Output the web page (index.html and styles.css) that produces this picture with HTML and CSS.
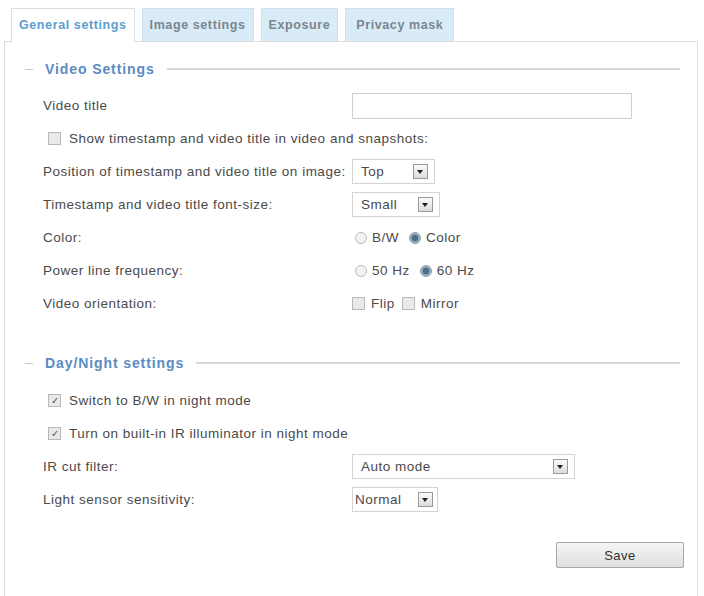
FILE: index.html
```html
<!DOCTYPE html>
<html lang="en">
<head>
    <meta charset="UTF-8">
    <title>General settings</title>
    <link rel="stylesheet" href="styles.css">
</head>
<body>
    <div class="tabs">
        <div class="tab active">General settings</div>
        <div class="tab">Image settings</div>
        <div class="tab">Exposure</div>
        <div class="tab">Privacy mask</div>
    </div>

    <div class="panel">
        <div class="section-head">
            <span class="dash"></span>
            <span class="section-title">Video Settings</span>
            <span class="rule"></span>
        </div>

        <div class="row">
            <div class="label">Video title</div>
            <div class="value"><div class="text-input wide"></div></div>
        </div>
        <div class="row">
            <div class="check-line"><span class="checkbox"></span>Show timestamp and video title in video and snapshots:</div>
        </div>
        <div class="row">
            <div class="label">Position of timestamp and video title on image:</div>
            <div class="value"><div class="select w83"><span>Top</span><span class="drop"></span></div></div>
        </div>
        <div class="row">
            <div class="label">Timestamp and video title font-size:</div>
            <div class="value"><div class="select w88"><span>Small</span><span class="drop"></span></div></div>
        </div>
        <div class="row">
            <div class="label">Color:</div>
            <div class="value">
                <span class="radio"></span><span class="opt">B/W</span>
                <span class="radio on"></span><span class="opt">Color</span>
            </div>
        </div>
        <div class="row">
            <div class="label">Power line frequency:</div>
            <div class="value">
                <span class="radio"></span><span class="opt">50 Hz</span>
                <span class="radio on"></span><span class="opt">60 Hz</span>
            </div>
        </div>
        <div class="row">
            <div class="label">Video orientation:</div>
            <div class="value">
                <span class="checkbox"></span><span class="opt">Flip</span>
                <span class="checkbox"></span><span class="opt">Mirror</span>
            </div>
        </div>

        <div class="section-head second">
            <span class="dash"></span>
            <span class="section-title">Day/Night settings</span>
            <span class="rule"></span>
        </div>

        <div class="row">
            <div class="check-line"><span class="checkbox checked">&#10003;</span>Switch to B/W in night mode</div>
        </div>
        <div class="row">
            <div class="check-line"><span class="checkbox checked">&#10003;</span>Turn on built-in IR illuminator in night mode</div>
        </div>
        <div class="row">
            <div class="label">IR cut filter:</div>
            <div class="value"><div class="select w223"><span>Auto mode</span><span class="drop"></span></div></div>
        </div>
        <div class="row">
            <div class="label">Light sensor sensitivity:</div>
            <div class="value"><div class="select w86 tight"><span>Normal</span><span class="drop"></span></div></div>
        </div>

        <div class="actions">
            <button class="save-btn">Save</button>
        </div>
    </div>
</body>
</html>
```

FILE: styles.css
```css
body {
    margin: 0;
    background: #fff;
    font-family: 'Liberation Sans', Arial, sans-serif;
    font-size: 13.5px;
    letter-spacing: 0.5px;
    color: #4a4a4a;
}

.tabs {
    display: flex;
    gap: 7px;
    padding: 8px 0 0 11px;
    position: relative;
    z-index: 1;
}

.tab {
    height: 32px;
    line-height: 32px;
    padding: 0 7px;
    background: #d9ebf6;
    border: 1px solid #cfe0ec;
    border-bottom: none;
    font-weight: bold;
    font-size: 12.5px;
    letter-spacing: 0.6px;
    color: #7a8690;
}

.tab:last-child {
    padding: 0 10px;
}

.tab.active {
    background: #fff;
    border-color: #ddd;
    color: #5b9dcf;
    height: 33px;
    margin-bottom: -1px;
}

.panel {
    border: 1px solid #ddd;
    border-bottom: none;
    margin: 0 6px 0 4px;
    height: 560px;
    padding: 0 0 0 38px;
}

.section-head {
    display: flex;
    align-items: center;
    height: 30px;
    margin: 12px 0 5px -18px;
    padding-right: 17px;
}

.section-head.second {
    margin-top: 28px;
    margin-bottom: 6px;
}

.dash {
    width: 8px;
    border-top: 1px solid #c8c8c8;
    margin-right: 12px;
}

.section-title {
    font-weight: bold;
    font-size: 14px;
    letter-spacing: 0.9px;
    color: #5a8cc2;
}

.rule {
    flex: 1;
    border-top: 2px solid #d8d8d8;
    margin-left: 12px;
}

.row {
    display: flex;
    align-items: center;
    height: 33px;
}

.label {
    width: 309px;
}

.value {
    display: flex;
    align-items: center;
}

.check-line {
    display: flex;
    align-items: center;
    padding-left: 5px;
}

.checkbox {
    width: 11px;
    height: 11px;
    border: 1px solid #b8b8b8;
    background: #e9e9e9;
    margin-right: 8px;
    font-size: 10px;
    line-height: 11px;
    text-align: center;
    letter-spacing: 0;
    color: #555;
}

.value .checkbox {
    margin-right: 6px;
}

.radio {
    width: 10px;
    height: 10px;
    border: 1px solid #bbb;
    border-radius: 50%;
    background: #f4f4f4;
    margin: 0 5px 0 3px;
}

.radio.on {
    background: radial-gradient(circle, #4f6f86 0 3px, #9fb4c4 4px);
    border-color: #8aa0b0;
}

.opt {
    margin-right: 7px;
}

.text-input {
    height: 24px;
    border: 1px solid #cfcfcf;
    background: #fff;
}

.wide {
    width: 278px;
}

.select {
    border: 1px solid #d4d4d4;
    display: flex;
    align-items: center;
    justify-content: space-between;
    padding: 0 6px 0 8px;
    box-sizing: border-box;
    height: 25px;
}

.select.tight {
    padding: 0 4px 0 2px;
}

.w83 { width: 83px; }
.w88 { width: 88px; }
.w86 { width: 86px; }
.w223 { width: 223px; }

.drop {
    width: 13px;
    height: 13px;
    border: 1px solid #999;
    background: linear-gradient(#fafafa, #dcdcdc);
    position: relative;
}

.drop::after {
    content: '';
    position: absolute;
    left: 3px;
    top: 5px;
    border-left: 3.5px solid transparent;
    border-right: 3.5px solid transparent;
    border-top: 4px solid #222;
}

.actions {
    display: flex;
    justify-content: flex-end;
    padding: 26px 13px 0 0;
}

.save-btn {
    width: 128px;
    height: 26px;
    border: 1px solid #a8a8a8;
    border-radius: 2px;
    background: linear-gradient(#f6f6f6, #dedede);
    font-family: 'Liberation Sans', Arial, sans-serif;
    font-size: 13px;
    letter-spacing: 0.5px;
    color: #333;
}
```
